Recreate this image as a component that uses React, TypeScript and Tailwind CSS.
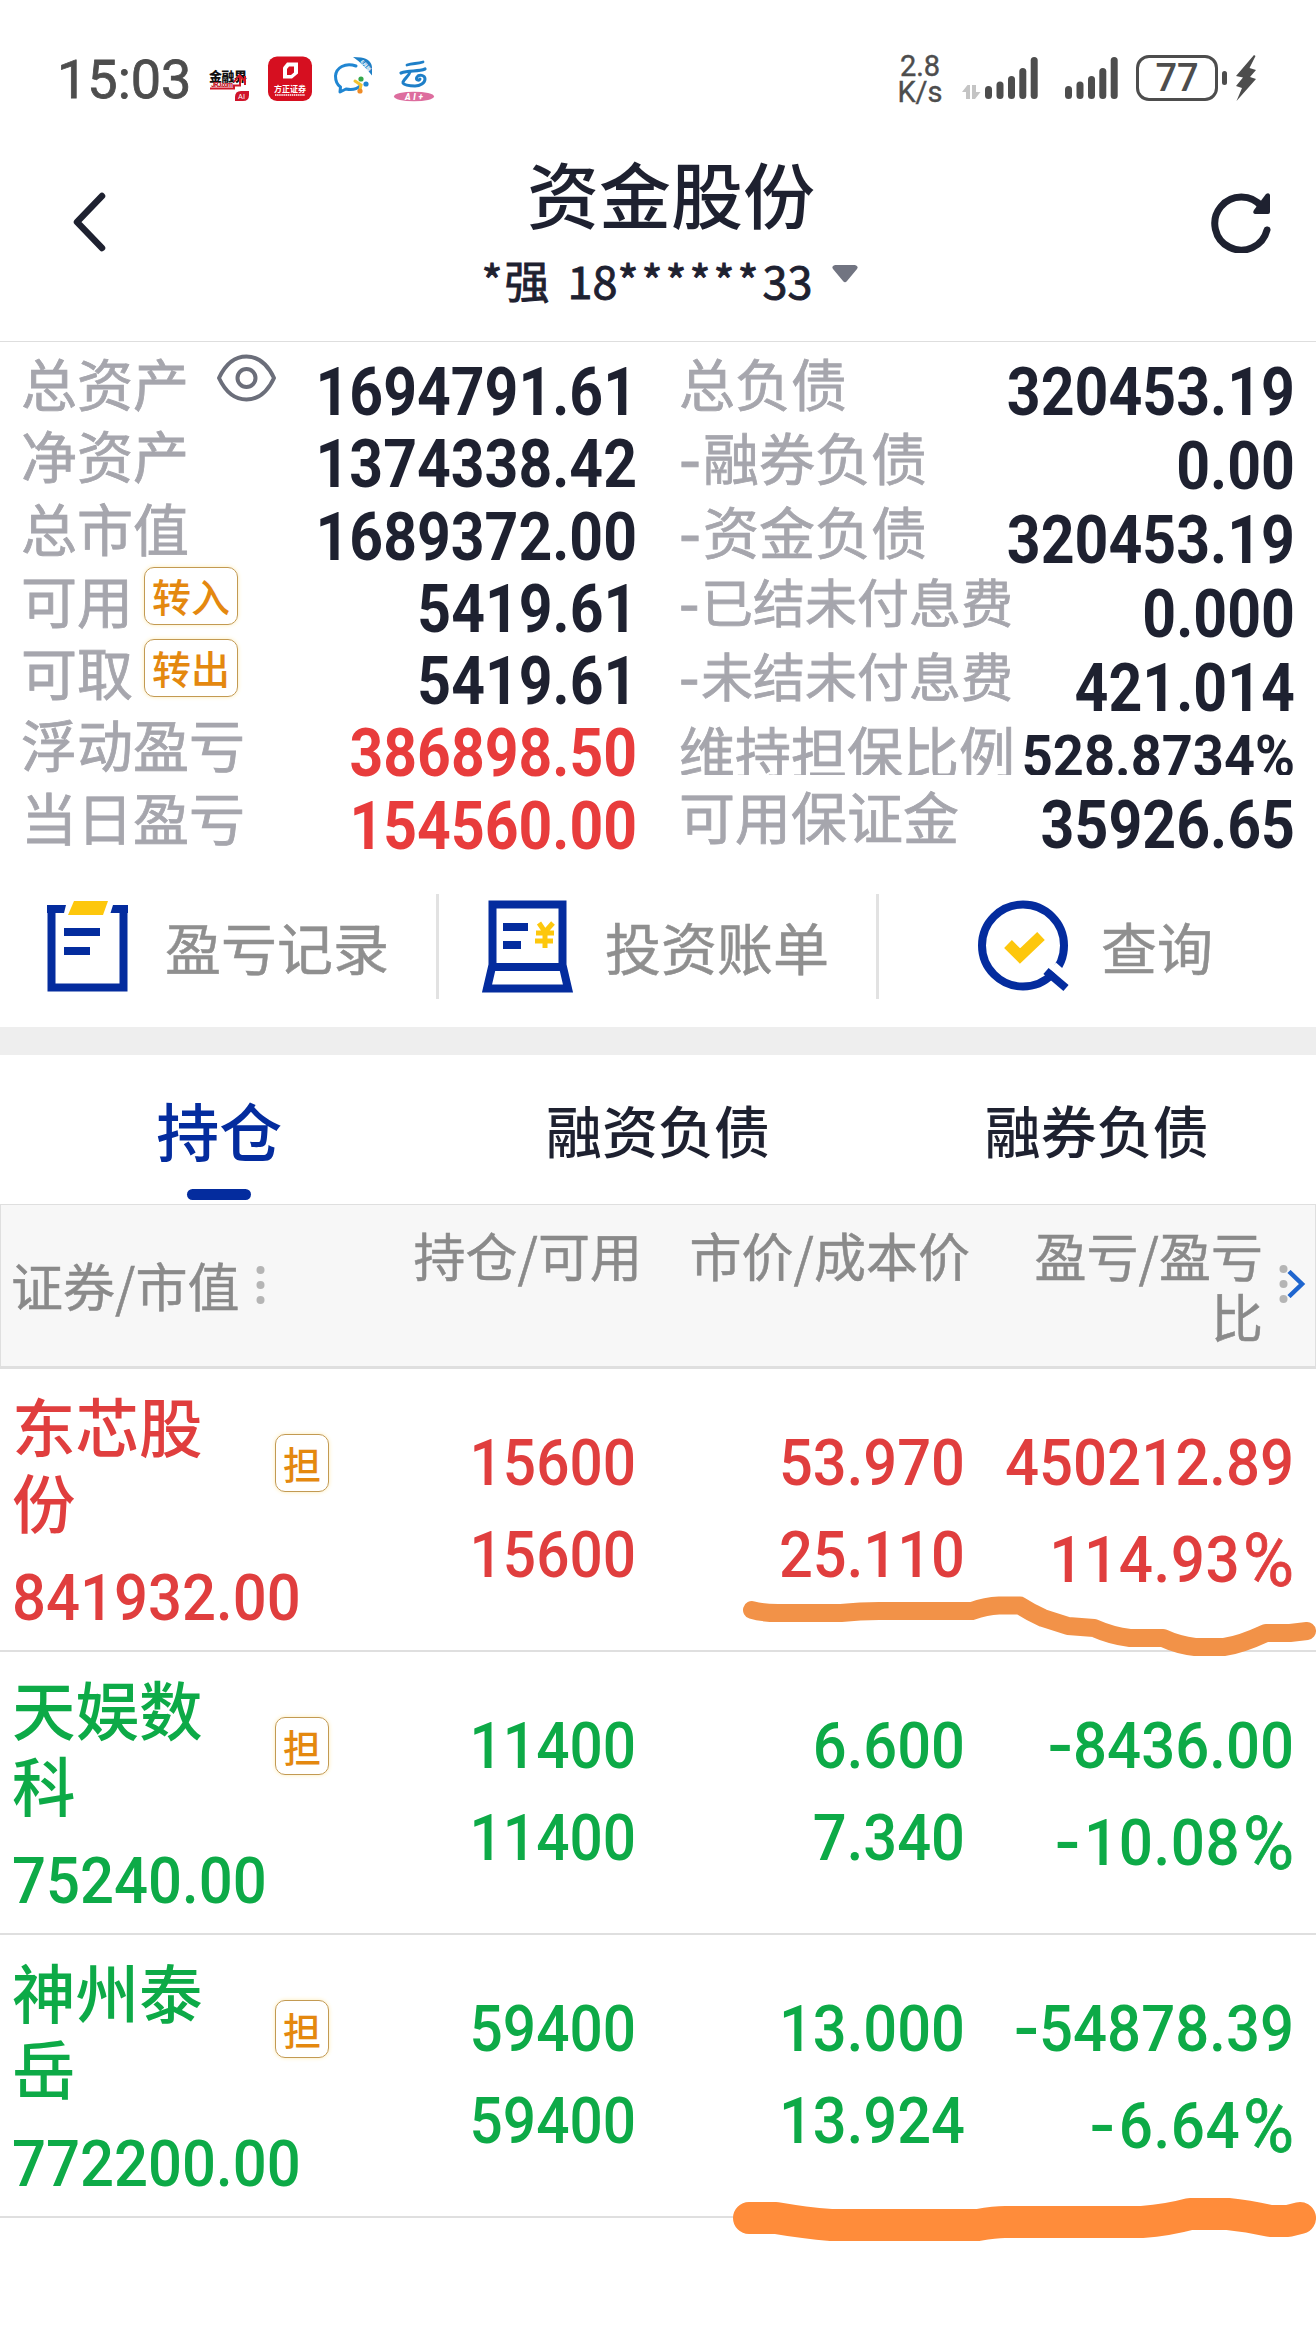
import React from 'react';
import clsx from 'clsx';

type Asset = { label: string; value: string; tag?: string; eye?: boolean; red?: boolean };

const assets: Asset[] = [
    { label: '总资产', value: '1694791.61', eye: true },
    { label: '净资产', value: '1374338.42' },
    { label: '总市值', value: '1689372.00' },
    { label: '可用', value: '5419.61', tag: '转入' },
    { label: '可取', value: '5419.61', tag: '转出' },
    { label: '浮动盈亏', value: '386898.50', red: true },
    { label: '当日盈亏', value: '154560.00', red: true },
];

const debts = [
    { label: '总负债', value: '320453.19', row: 'h-[74px]', text: 'text-[56px]', num: 'mt-[11px] text-[66px] scale-x-[0.895]' },
    { label: '融券负债', dash: 'w-[24px]', value: '0.00', row: 'h-[74px]', text: 'text-[56px]', num: 'mt-[11px] text-[66px] scale-x-[0.895]' },
    { label: '资金负债', dash: 'w-[24px]', value: '320453.19', row: 'h-[71px]', text: 'text-[56px]', num: 'mt-[11px] text-[66px] scale-x-[0.895]' },
    { label: '已结未付息费', dash: 'w-[22px]', value: '0.000', row: 'h-[74px]', text: 'text-[52px]', num: 'mt-[14px] text-[66px] scale-x-[0.895]' },
    { label: '未结未付息费', dash: 'w-[22px]', value: '421.014', row: 'h-[75px]', text: 'text-[52px]', num: 'mt-[14px] text-[66px] scale-x-[0.895]' },
    { label: '维持担保比例', value: '528.8734%', row: 'h-[61px] mb-[4px] overflow-hidden', text: 'text-[56px]', num: 'mt-[7px] text-[57px] scale-x-[0.95]' },
    { label: '可用保证金', value: '35926.65', row: 'h-[72px]', text: 'text-[56px]', num: 'mt-[11px] text-[66px] scale-x-[0.895]' },
];

const holdings = [
    { name: '东芯股份', value: '841932.00', qty: ['15600', '15600'], price: ['53.970', '25.110'], profit: '450212.89', ratio: '114.93', up: true },
    { name: '天娱数科', value: '75240.00', qty: ['11400', '11400'], price: ['6.600', '7.340'], profit: '8436.00', ratio: '10.08', up: false },
    { name: '神州泰岳', value: '772200.00', qty: ['59400', '59400'], price: ['13.000', '13.924'], profit: '54878.39', ratio: '6.64', up: false },
];

const Signal: React.FC<{ className?: string }> = ({ className }) => (
    <svg className={className} width="53" height="42" viewBox="0 0 53 42" fill="#4d4d4d">
        <rect x="0" y="29" width="7" height="13" rx="3.5" />
        <rect x="11.5" y="24.5" width="7" height="17.5" rx="3.5" />
        <rect x="23" y="19" width="7" height="23" rx="3.5" />
        <rect x="34.3" y="11" width="7" height="31" rx="3.5" />
        <rect x="45.7" y="0" width="7" height="42" rx="3.5" />
    </svg>
);

const StatusBar: React.FC = () => (
    <div className="flex h-[160px] items-start pl-[57px] text-[#4d4d4d]">
        <div className="mt-[52px] w-[150px] text-[54px] leading-[56px] [-webkit-text-stroke:0.8px]">15:03</div>
        <div className="mt-[54px] flex">
            {/* 金融界 */}
            <svg width="44" height="50" viewBox="0 0 44 50">
                <text x="2" y="27" fontSize="13" fontWeight="900" fill="#111" textLength="38" fontFamily="Noto Sans CJK SC">金融界</text>
                <path d="M3 34.500h24v-3h6v-10M27 28l5.500-7 6 7M38 22v9" fill="none" stroke="#cf1526" strokeWidth="2" />
                <text x="4" y="33" fontSize="7" fontWeight="900" fill="#c4202c" textLength="22" fontFamily="Roboto">JRJ.com</text>
                <path d="M28 47v-4q0-6 6-6h8v4q0 6-6 6z" fill="#d0142a" />
                <text x="31" y="45" fontSize="7.500" fill="#fff" fontFamily="Roboto">AI</text>
            </svg>
            {/* 方正证券 */}
            <svg className="ml-[16px]" width="46" height="50" viewBox="0 0 46 50">
                <rect x="1" y="2.500" width="44" height="44.500" rx="9" fill="#d60f20" />
                <path d="M20 8.500h11v11l-6 5h-9v-11z" fill="#fff" />
                <path d="M22 12.500h5v6l-3 2.500h-4v-6z" fill="#d60f20" />
                <text x="7" y="38" fontSize="8" fontWeight="700" fill="#fff" textLength="32" fontFamily="Noto Sans CJK SC">方正证券</text>
                <path d="M8 41h30" stroke="#fff" strokeWidth="1.600" strokeDasharray="1.500 .6" />
            </svg>
            <svg className="ml-[20px]" width="42" height="50" viewBox="0 0 42 50">
                <path d="M23 12C12 8 3 14 2.500 22c0 5 2 9 5 11l-.5 5 6-3c5 1 10 1 14-3" fill="none" stroke="#2086d2" strokeWidth="3" strokeLinecap="round" strokeLinejoin="round" />
                <path d="M20 3l8 .500c7 1 11 5 11 10v8c-5-6-11-13-19-18.500z" fill="#1d7fc6" />
                <text x="27" y="8" fontSize="5" fontWeight="700" fill="#fff" transform="rotate(48 27 8)" fontFamily="Noto Sans CJK SC">6月版</text>
                <path d="M22 27l6 4-1 5" fill="none" stroke="#f2c230" strokeWidth="3" strokeLinecap="round" />
                <circle cx="28" cy="25" r="2.600" fill="#35a84a" />
                <circle cx="33" cy="30" r="2.600" fill="#2086d2" />
                <circle cx="27" cy="37" r="2.600" fill="#ef8a25" />
            </svg>
            <svg className="ml-[18px]" width="42" height="50" viewBox="0 0 42 50">
                <path d="M14 11c6-2 10-1 16-3" fill="none" stroke="#1e7fc8" strokeWidth="2.800" strokeLinecap="round" />
                <path d="M8 19c8-3 17-1 24-4" fill="none" stroke="#1e7fc8" strokeWidth="3.200" strokeLinecap="round" />
                <path d="M17 18c-1 4-6 7-7 10s7 4 12 4 10-3 10-7-6-5-8-2 2 4 3 2" fill="none" stroke="#1e7fc8" strokeWidth="3" strokeLinecap="round" />
                <ellipse cx="21" cy="42.500" rx="20" ry="4.800" fill="#dd6d9e" />
                <text x="12" y="45.500" fontSize="8.500" fontWeight="900" fontStyle="italic" fill="#fff" textLength="18" fontFamily="Roboto">AI+</text>
            </svg>
        </div>
        <div className="ml-[462px] mt-[53px] w-[46px] text-center text-[29px] leading-[26px] [-webkit-text-stroke:0.4px]">
            <div>2.8</div>
            <div>K/s</div>
        </div>
        <svg className="ml-[19px] mt-[84px]" width="19" height="16" viewBox="0 0 19 16" fill="#c4c4c4">
            <path d="M0 8l5.500-7H8v14H4V8zM10 1h4v7h4.500L13 15h-3z" />
        </svg>
        <Signal className="ml-[4px] mt-[57px]" />
        <Signal className="ml-[27px] mt-[57px]" />
        <div className="ml-[18px] mt-[55px] h-[46px] w-[82px] rounded-[13px] border-[3px] border-[#4d4d4d] text-center text-[38px] font-medium leading-[41px]">
            77
        </div>
        <div className="ml-[4px] mt-[71px] h-[14px] w-[5px] rounded-full bg-[#4d4d4d]" />
        <svg className="ml-[9px] mt-[55px]" width="20" height="46" viewBox="0 0 20 46" fill="#4d4d4d">
            <path d="M18 0L0 21l7 1.500L0 31l6 2-5.500 13L20 24l-6-2 6-7-6.500-2L19.500 1z" />
        </svg>
    </div>
);

const Header: React.FC = () => (
    <div className="flex h-[182px] items-start justify-between border-b border-[#dedede] pl-[71px] pr-[43px]">
        <svg className="mt-[32px]" width="36" height="60" viewBox="0 0 36 60" fill="none" stroke="#1e2130" strokeWidth="6.500" strokeLinecap="round" strokeLinejoin="round">
            <path d="M31 4L6 30l25 26" />
        </svg>
        <div className="ml-[24px] flex flex-col items-center text-[#1e2130]">
            <h1 className="mt-[-4px] font-['Noto_Sans_CJK_SC',sans-serif] text-[72px] font-medium leading-[72px]">资金股份</h1>
            <div className="mt-[18px] flex items-center font-['Noto_Sans_CJK_SC',sans-serif] text-[45px] leading-[68px] [-webkit-text-stroke:0.9px]">
                <span className="ml-[-3px]">*</span>
                <span className="ml-[2px]">强</span>
                <span className="ml-[18px]">18</span>
                <span className="tracking-[3px]">******</span>
                <span className="ml-[1px]">33</span>
                <svg className="mb-[12px] ml-[19px]" width="26" height="18" viewBox="0 0 26 18" fill="#717481">
                    <path d="M3 0h20q4 1 2 4L15 16q-2 2.500-4 0L1 4Q-1 1 3 0z" />
                </svg>
            </div>
        </div>
        <svg className="mt-[31px]" width="62" height="62" viewBox="0 0 62 62">
            <path d="M51 16A26.500 26.500 0 1 0 56 39" fill="none" stroke="#1e2130" strokeWidth="7" strokeLinecap="round" />
            <path d="M59 4v17q0 2-2 2H44q-3-1-1-4L55 3q3-2 4 1z" fill="#1e2130" />
        </svg>
    </div>
);

const Tag: React.FC<{ text: string; className?: string }> = ({ text, className }) => (
    <span className={clsx('block rounded-[10px] border-[1.5px] border-[#c39a52] text-center text-[#e4880f] shadow-[0_0_4px_#fdebb5]', className)}>
        {text}
    </span>
);

const Summary: React.FC = () => (
    <div className="flex h-[522px] pt-[4px] font-['Noto_Sans_CJK_SC',sans-serif] text-[#a6a6ad]">
        <div className="w-[637px] pl-[21px]">
            {assets.map((a) => (
                <div key={a.label} className="flex h-[72.3px] items-start whitespace-nowrap text-[56px] leading-[72px]">
                    <span className="[-webkit-text-stroke:0.8px]">{a.label}</span>
                    {a.eye && (
                        <svg className="ml-[27px] mt-[8px]" width="61" height="48" viewBox="0 0 61 48" fill="none" stroke="#6b6e7a" strokeWidth="4">
                            <path d="M3 24C10 9 20 2.500 30.500 2.500S51 9 58 24C51 39 41 45.500 30.500 45.500S10 39 3 24z" strokeLinejoin="round" />
                            <circle cx="30.500" cy="24" r="9" />
                        </svg>
                    )}
                    {a.tag && <Tag text={a.tag} className="ml-[11px] mt-[4px] h-[58px] w-[94px] text-[39px] font-medium leading-[54px]" />}
                    <span
                        className={clsx(
                            'ml-auto mt-[11px] origin-right scale-x-[0.893] font-[Roboto] text-[66px] font-bold',
                            a.red ? 'text-[#e83c3c]' : 'text-[#1e2130]'
                        )}
                    >
                        {a.value}
                    </span>
                </div>
            ))}
        </div>
        <div className="w-[658px] pl-[42px]">
            {debts.map((d) => (
                <div key={d.label} className={clsx('flex items-start whitespace-nowrap leading-[72px]', d.row)}>
                    <span className={clsx('flex [-webkit-text-stroke:0.8px]', d.text)}>
                        {d.dash && <span className={clsx('origin-left scale-x-110 font-medium', d.dash)}>-</span>}
                        {d.label}
                    </span>
                    <span className={clsx('-ml-6 flex-1 origin-right text-right font-[Roboto] font-bold text-[#1e2130]', d.num)}>
                        {d.value}
                    </span>
                </div>
            ))}
        </div>
    </div>
);

const Actions: React.FC = () => (
    <div className="flex h-[163px] items-center pt-[1px] font-['Noto_Sans_CJK_SC',sans-serif] text-[56px] leading-[72px] text-[#8f8f8f] [-webkit-text-stroke:0.5px]">
        <div className="flex h-[105px] w-[439px] items-center border-r-[3px] border-[#e2e2e2] pl-[47px]">
            <svg width="81" height="92" viewBox="0 0 81 92">
                <path d="M18 9H4.500v78.500h72V9H64" fill="none" stroke="#042c9e" strokeWidth="8" />
                <path d="M14 0h12l-7 16h-9zM58 0h12v16h-9z" fill="#fff" />
                <path d="M0 5h19l-2 8H0zM66 5h15v8H63.500z" fill="#042c9e" />
                <path d="M27 1h34l-5 14H21z" fill="#fdc70c" />
                <path d="M17 28h36v8H17zM17 47h26v8H17z" fill="#042c9e" />
            </svg>
            <span className="ml-[37px]">盈亏记录</span>
        </div>
        <div className="flex h-[105px] w-[440px] items-center border-r-[3px] border-[#e2e2e2] pl-[43px]">
            <svg width="91" height="94" viewBox="0 0 91 94">
                <path d="M10.500 68V5.500h70V68M10 68h71l5 21.500H5z" fill="none" stroke="#042c9e" strokeWidth="8" />
                <path d="M21 24h25v8H21zM21 42h18v8H21z" fill="#042c9e" />
                <path d="M57 24l6 9 8-9M54 34h18M53 42h18M63 33v16" fill="none" stroke="#fdc70c" strokeWidth="5" />
            </svg>
            <span className="ml-[32px]">投资账单</span>
        </div>
        <div className="flex items-center pl-[98px]">
            <svg width="93" height="94" viewBox="0 0 93 94" fill="none">
                <circle cx="46" cy="46.500" r="41" stroke="#042c9e" strokeWidth="8" />
                <path d="M76 67l16 14" stroke="#fff" strokeWidth="9" />
                <path d="M69 72l20 17" stroke="#042c9e" strokeWidth="8" />
                <path d="M31 45l12 12 21-20" stroke="#fdc70c" strokeWidth="11" />
            </svg>
            <span className="ml-[31px]">查询</span>
        </div>
    </div>
);

const Tabs: React.FC = () => (
    <div className="grid h-[149px] grid-cols-3 text-center font-['Noto_Sans_CJK_SC',sans-serif] text-[56px] leading-[147px] text-[#1e2130]">
        <div className="relative text-[63px] font-medium text-[#042c9e]">
            持仓
            <div className="absolute bottom-[4px] left-1/2 h-[11px] w-[64px] -translate-x-1/2 rounded-full bg-[#042c9e]" />
        </div>
        <div className="font-medium">融资负债</div>
        <div className="font-medium">融券负债</div>
    </div>
);

const Dots: React.FC<{ className?: string }> = ({ className }) => (
    <svg className={className} width="9" height="40" viewBox="0 0 9 40" fill="#b5b5b5">
        <circle cx="4.500" cy="5" r="4" />
        <circle cx="4.500" cy="20" r="4" />
        <circle cx="4.500" cy="35" r="4" />
    </svg>
);

const TableHead: React.FC = () => (
    <div className="flex h-[165px] items-start whitespace-nowrap border border-b-[3px] border-[#dfdfdf] bg-[#f7f7f7] pt-[19px] text-right font-['Noto_Sans_CJK_SC',sans-serif] text-[52px] leading-[61px] text-[#8a8a8a] [-webkit-text-stroke:0.5px]">
        <div className="mt-[30px] w-[300px] pl-[10px] text-left">
            <span className="inline-flex items-center">
                证券/市值
                <Dots className="ml-[17px]" />
            </span>
        </div>
        <div className="w-[341px]">持仓/可用</div>
        <div className="w-[328px]">市价/成本价</div>
        <div className="w-[293px]">
            盈亏/盈亏
            <br />比
        </div>
        <div className="ml-[16px] mt-[40px] flex items-center">
            <Dots />
            <svg className="ml-[-1px]" width="19" height="28" viewBox="0 0 19 28" fill="none" stroke="#1f66cf" strokeWidth="4.500">
                <path d="M2 1.500l13 12.500L2 26.500" />
            </svg>
        </div>
    </div>
);

const Num: React.FC<{ children: React.ReactNode; className?: string }> = ({ children, className }) => (
    <div className={clsx('h-[92px] font-[Roboto] text-[64px] font-medium leading-[92px]', className)}>{children}</div>
);

const App: React.FC = () => {
    return (
        <div className="relative min-h-[2352px] w-[1316px] overflow-hidden bg-white font-[Roboto,sans-serif]">
            <StatusBar />
            <Header />
            <Summary />
            <Actions />
            <div className="h-[28px] bg-[#eeeeee]" />
            <Tabs />
            <TableHead />
            {holdings.map((h) => (
                <div
                    key={h.name}
                    className={clsx('flex h-[283px] items-start border-b-2 border-[#dfdfdf]', h.up ? 'text-[#e03e3e]' : 'text-[#0daa47]')}
                >
                    <div className="w-[275px] pl-[12px]">
                        <div className="mt-[18px] w-[200px] font-['Noto_Sans_CJK_SC',sans-serif] text-[63.5px] font-medium leading-[75.5px]">{h.name}</div>
                        <Num className="mt-[15px] origin-left scale-x-[0.935]">{h.value}</Num>
                    </div>
                    <Tag text="担" className="mt-[65px] h-[58px] w-[54px] font-['Noto_Sans_CJK_SC',sans-serif] text-[38px] font-medium leading-[55px]" />
                    <div className="mt-[49px] w-[307px] text-right">
                        <Num className="origin-right scale-x-[0.915]">{h.qty[0]}</Num>
                        <Num className="origin-right scale-x-[0.915]">{h.qty[1]}</Num>
                    </div>
                    <div className="mt-[49px] w-[329px] text-right">
                        <Num className="origin-right scale-x-[0.932]">{h.price[0]}</Num>
                        <Num className="origin-right scale-x-[0.932]">{h.price[1]}</Num>
                    </div>
                    <div className="mt-[49px] w-[329px] text-right">
                        <Num className="origin-right scale-x-[0.936]">
                            {!h.up && <span className="inline-block origin-right scale-x-125">-</span>}
                            {h.profit}
                        </Num>
                        <Num className="mt-[5px] origin-right scale-x-[0.94]">
                            {!h.up && <span className="mr-[4px] inline-block origin-right scale-x-125">-</span>}
                            <span className="tracking-[0.6px]">{h.ratio}</span>
                            <span className="ml-[3px] inline-block h-[64px] align-[-4px] text-[74px] font-normal leading-[64px] [-webkit-text-stroke:0.8px]">%</span>
                        </Num>
                    </div>
                </div>
            ))}

            {/* hand-drawn marker lines over the table */}
            <svg className="absolute left-[730px] top-[1590px]" width="586" height="660" viewBox="730 1590 586 660" fill="none" strokeLinecap="round" strokeLinejoin="round">
                <path d="M752 1610Q762 1613 778 1613H841Q860 1611 879 1611H972Q986 1606 999 1605.500H1020Q1030 1612 1043 1618L1068 1626 1094 1628Q1112 1636 1130 1638H1163Q1178 1645 1195 1647H1224Q1240 1645 1266 1633L1290 1633 1307 1631" stroke="#f29248" strokeWidth="18" />
                <path d="M749 2218H776Q805 2223 831 2225H978Q995 2222 1005 2222H1142Q1168 2220 1190 2214H1228Q1248 2216 1270 2221H1288L1300 2218" stroke="#ff8c3a" strokeWidth="32" />
            </svg>
        </div>
    );
};

export default App;
